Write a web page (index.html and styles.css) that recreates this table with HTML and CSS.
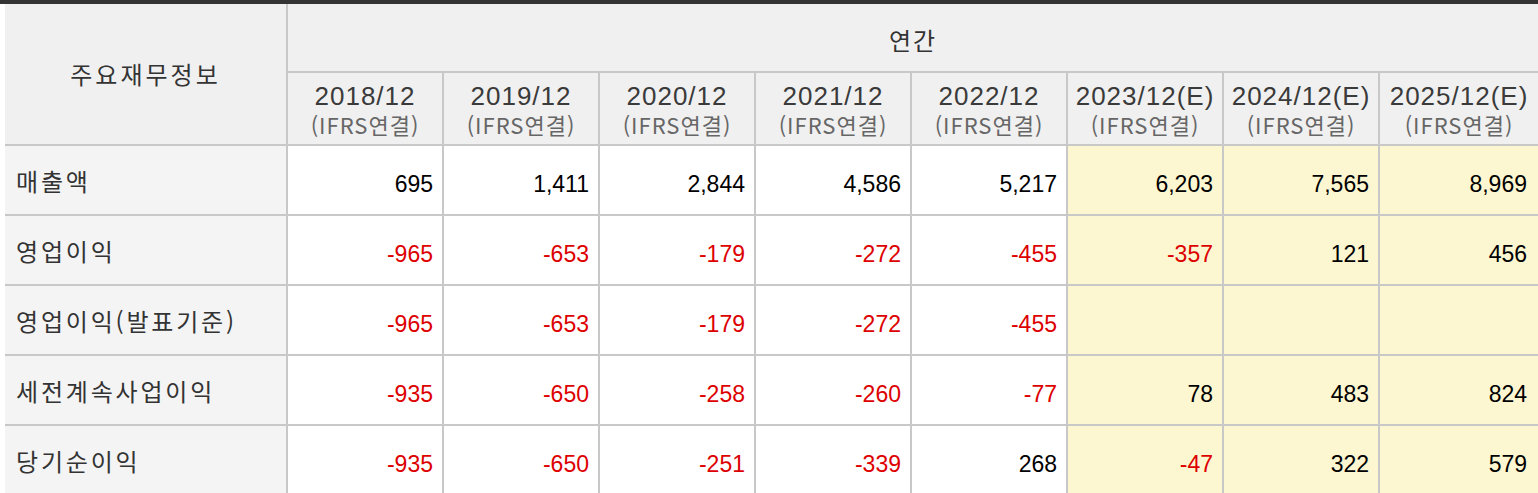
FILE: index.html
```html
<!DOCTYPE html>
<html lang="ko">
<head>
<meta charset="utf-8">
<title>주요재무정보</title>
<link rel="stylesheet" href="styles.css">
</head>
<body>
<div class="topbar"></div>
<div class="fin">
  <div class="cell head title">주요재무정보</div>
  <div class="cell head period">연간</div>

  <div class="cell head date"><span class="d">2018/12</span><span class="s">(IFRS연결)</span></div>
  <div class="cell head date"><span class="d">2019/12</span><span class="s">(IFRS연결)</span></div>
  <div class="cell head date"><span class="d">2020/12</span><span class="s">(IFRS연결)</span></div>
  <div class="cell head date"><span class="d">2021/12</span><span class="s">(IFRS연결)</span></div>
  <div class="cell head date"><span class="d">2022/12</span><span class="s">(IFRS연결)</span></div>
  <div class="cell head date"><span class="d">2023/12(E)</span><span class="s">(IFRS연결)</span></div>
  <div class="cell head date"><span class="d">2024/12(E)</span><span class="s">(IFRS연결)</span></div>
  <div class="cell head date"><span class="d">2025/12(E)</span><span class="s">(IFRS연결)</span></div>

  <div class="cell label">매출액</div>
  <div class="cell num">695</div>
  <div class="cell num">1,411</div>
  <div class="cell num">2,844</div>
  <div class="cell num">4,586</div>
  <div class="cell num">5,217</div>
  <div class="cell num est">6,203</div>
  <div class="cell num est">7,565</div>
  <div class="cell num est end">8,969</div>

  <div class="cell label">영업이익</div>
  <div class="cell num neg">-965</div>
  <div class="cell num neg">-653</div>
  <div class="cell num neg">-179</div>
  <div class="cell num neg">-272</div>
  <div class="cell num neg">-455</div>
  <div class="cell num est neg">-357</div>
  <div class="cell num est">121</div>
  <div class="cell num est end">456</div>

  <div class="cell label">영업이익(발표기준)</div>
  <div class="cell num neg">-965</div>
  <div class="cell num neg">-653</div>
  <div class="cell num neg">-179</div>
  <div class="cell num neg">-272</div>
  <div class="cell num neg">-455</div>
  <div class="cell num est"></div>
  <div class="cell num est"></div>
  <div class="cell num est end"></div>

  <div class="cell label">세전계속사업이익</div>
  <div class="cell num neg">-935</div>
  <div class="cell num neg">-650</div>
  <div class="cell num neg">-258</div>
  <div class="cell num neg">-260</div>
  <div class="cell num neg">-77</div>
  <div class="cell num est">78</div>
  <div class="cell num est">483</div>
  <div class="cell num est end">824</div>

  <div class="cell label">당기순이익</div>
  <div class="cell num neg">-935</div>
  <div class="cell num neg">-650</div>
  <div class="cell num neg">-251</div>
  <div class="cell num neg">-339</div>
  <div class="cell num">268</div>
  <div class="cell num est neg">-47</div>
  <div class="cell num est">322</div>
  <div class="cell num est end">579</div>
</div>
</body>
</html>
```
FILE: styles.css
```css
html, body {
  margin: 0;
  padding: 0;
  background: #ffffff;
}

body {
  font-family: "Noto Sans CJK KR", "Liberation Sans", sans-serif;
  color: #333333;
}

.topbar {
  height: 4px;
  background: #333333;
}

.fin {
  display: grid;
  grid-template-columns: 281px repeat(7, 154px) 158px;
  grid-template-rows: 67px 71px repeat(5, 68px);
  gap: 2px;
  margin-left: 5px;
  padding-bottom: 2px;
  background: #c8c8c8;
}

.cell {
  display: flex;
  align-items: center;
  background: #ffffff;
  min-width: 0;
}

.head {
  background: #f0f0f0;
  justify-content: center;
}

.title {
  grid-row: 1 / span 2;
  font-size: 24px;
  letter-spacing: 3px;
  padding-bottom: 2px;
}

.period {
  grid-column: 2 / span 8;
  font-size: 24px;
  letter-spacing: 2px;
  padding-top: 4px;
}

.date {
  flex-direction: column;
  padding-top: 2px;
}

.date .d {
  font-family: "Liberation Sans", sans-serif;
  font-size: 26px;
  letter-spacing: 1px;
  line-height: 29px;
  color: #3a3a3a;
}

.date .s {
  font-family: "Noto Sans CJK KR", sans-serif;
  font-size: 22px;
  letter-spacing: 1px;
  line-height: 26px;
  color: #666666;
}

.label {
  background: #f4f4f4;
  padding-left: 11px;
  font-size: 24px;
  letter-spacing: 2.8px;
  color: #333333;
}

.num {
  justify-content: flex-end;
  padding-right: 9px;
  padding-top: 8px;
  font-family: "Liberation Sans", sans-serif;
  font-size: 23px;
  color: #000000;
}

.est {
  background: #fcf7d0;
}

.end {
  padding-right: 11px;
}

.neg {
  color: #dd0000;
}
```
